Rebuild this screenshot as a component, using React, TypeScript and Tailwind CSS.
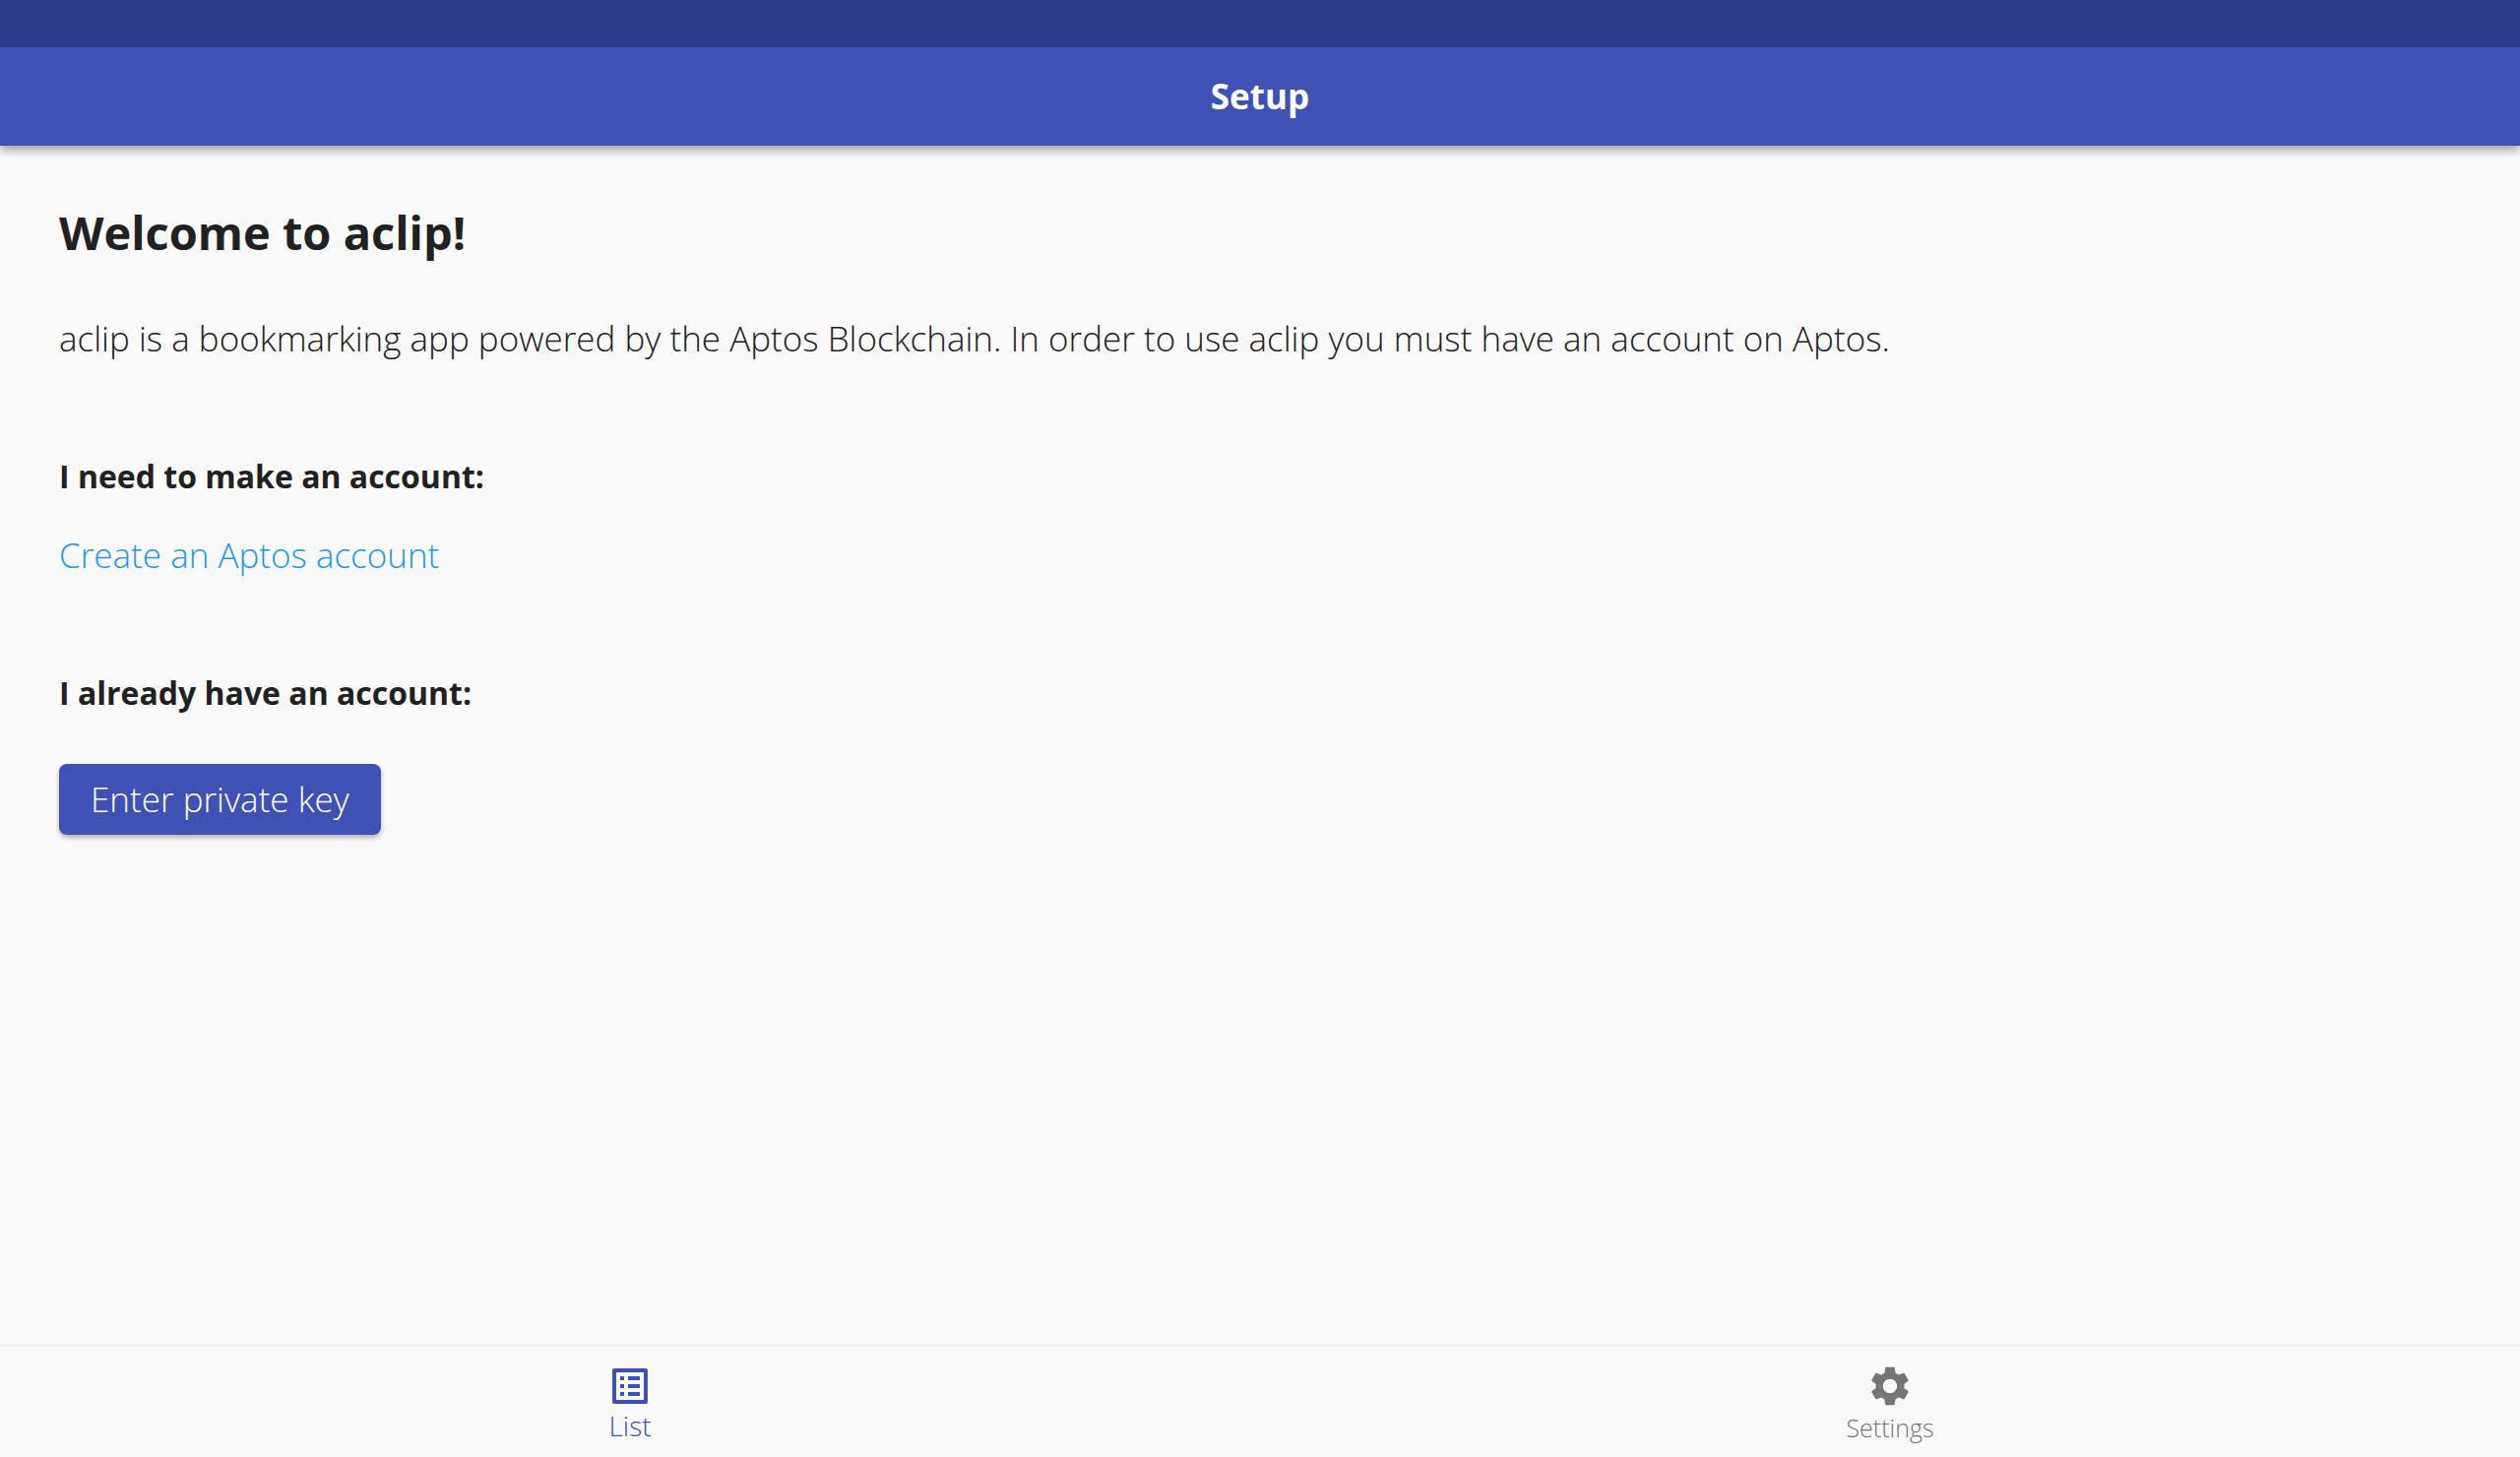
import { MdListAlt, MdSettings } from "react-icons/md";

function TopBar({ title }: { title: string }) {
  return (
    <header className="z-10 shrink-0 bg-[#3f51b5] shadow-[0_4px_10px_rgba(0,0,0,0.4)]">
      <div className="h-12 bg-[#2f3d88]" />
      <div className="flex h-[100px] items-center justify-center">
        <h1 className="text-[35px] leading-[40px] font-bold text-white">{title}</h1>
      </div>
    </header>
  );
}

function BottomNav() {
  return (
    <nav className="flex shrink-0 bg-[#fafafa] shadow-[0_-1px_4px_rgba(0,0,0,0.08)]">
      <button
        type="button"
        aria-current="page"
        className="flex flex-1 flex-col items-center py-4 text-[28px] leading-[32px] text-[#3f51b5]"
      >
        <MdListAlt className="size-12" aria-hidden="true" />
        List
      </button>
      <button
        type="button"
        className="flex flex-1 flex-col items-center pt-4 pb-3 text-[25px] leading-[36px] text-[#757575]"
      >
        <MdSettings className="size-12" aria-hidden="true" />
        Settings
      </button>
    </nav>
  );
}

export default function App() {
  return (
    <div className="flex min-h-screen flex-col bg-[#fafafa] font-['Open_Sans',sans-serif] font-light text-[#212121]">
      <TopBar title="Setup" />
      <main className="flex flex-1 flex-col items-start px-[60px] pt-[58px] text-[35px] leading-[40px]">
        <h2 className="text-[47px] leading-[60px] font-bold">Welcome to aclip!</h2>
        <p className="mt-[58px]">
          aclip is a bookmarking app powered by the Aptos Blockchain. In order to use aclip you must
          have an account on Aptos.
        </p>
        <section className="mt-[100px]">
          <h3 className="text-[32px] leading-[40px] font-bold">I need to make an account:</h3>
          <a href="#create" className="mt-10 block text-[#2196f3]">
            Create an Aptos account
          </a>
        </section>
        <section className="mt-[100px]">
          <h3 className="text-[32px] leading-[40px] font-bold">I already have an account:</h3>
          <button
            type="button"
            className="mt-[52px] block h-[72px] rounded-lg bg-[#3f51b5] px-8 text-white shadow-[0_3px_5px_rgba(0,0,0,0.3)]"
          >
            Enter private key
          </button>
        </section>
      </main>
      <BottomNav />
    </div>
  );
}
